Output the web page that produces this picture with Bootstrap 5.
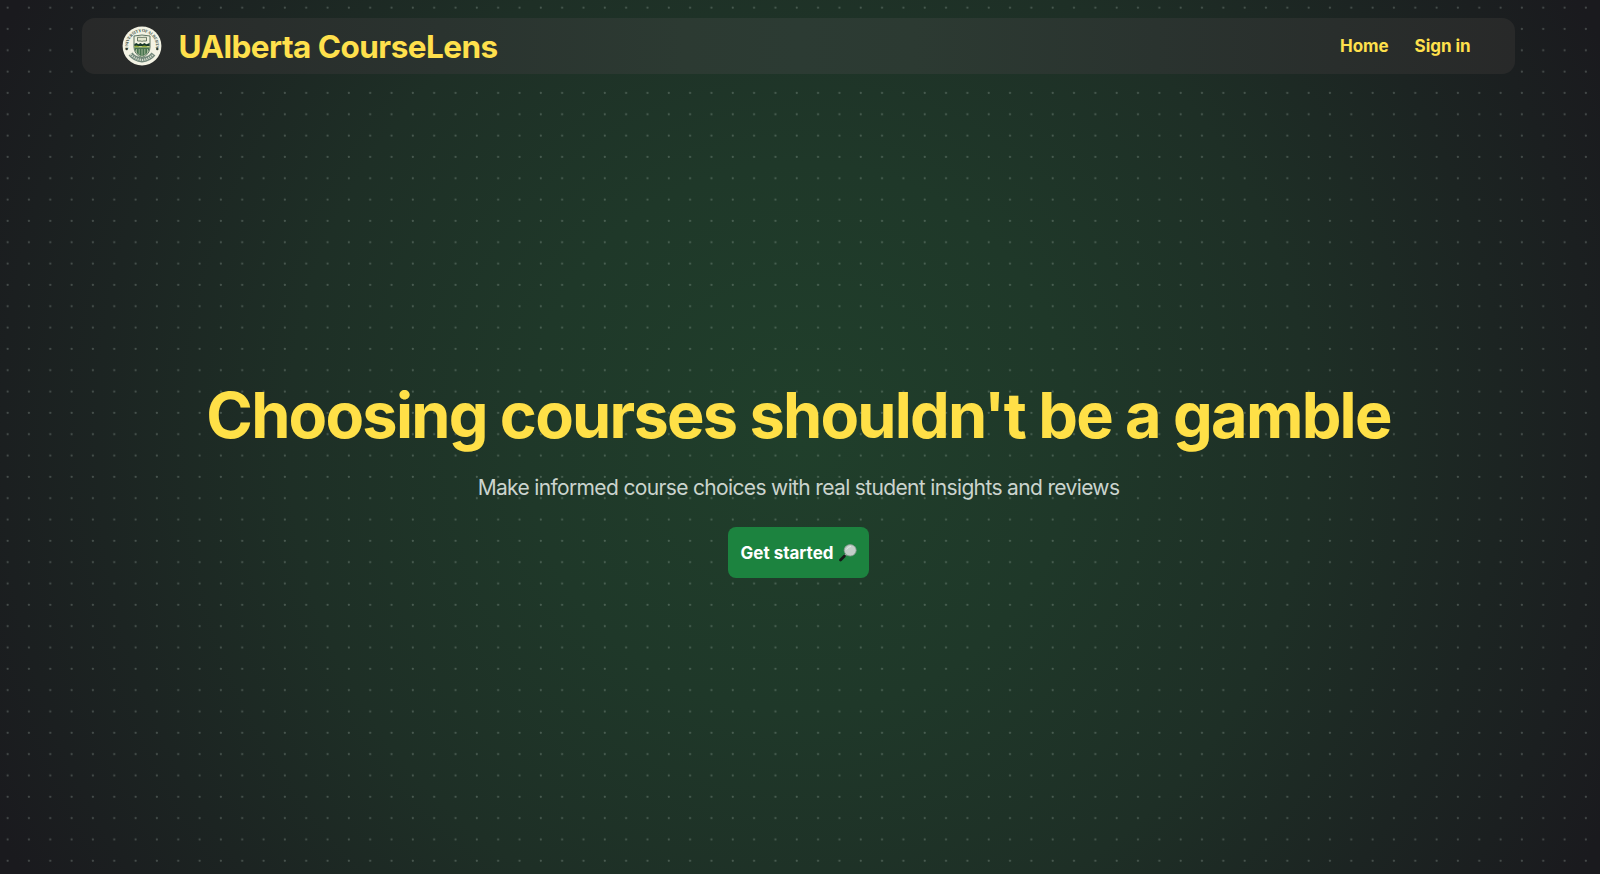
<!DOCTYPE html>
<html lang="en">
<head>
<meta charset="utf-8">
<meta name="viewport" content="width=device-width, initial-scale=1">
<title>UAlberta CourseLens</title>
<link href="https://cdn.jsdelivr.net/npm/bootstrap@5.3.0/dist/css/bootstrap.min.css" rel="stylesheet">
<style>
body{font-family:Inter,"Liberation Sans",sans-serif;background:#1a1a1e;color:#ffe047;overflow:hidden}
.page-shell{padding:18.4px 85px 0 82px;background:
radial-gradient(circle at 7.6px 7.6px,rgba(190,205,195,.34) 0,rgba(190,205,195,.24) .7px,transparent 1.5px) 0 0/21.333px 21.333px,
radial-gradient(circle at 50% 50%,#203f2b 0,#1f3829 30%,#1e2f26 56%,#1c2422 77%,#1a1a1e 98%)}
.top-bar{height:55.6px;border-radius:13px;background:linear-gradient(90deg,#282929,#2a332f 25%,#2c3a32 42%,#2c3b33 50%,#2c3a32 58%,#2a332f 75%,#282929);padding:0 44.5px 0 40px}
.brand-name{font-size:31.5px;font-weight:650;letter-spacing:-.53px;margin-left:16.5px;padding-top:1px;color:#ffe04c}
.top-link{font-size:17px;font-weight:650;letter-spacing:-.05px;padding-top:1px;color:#ffe04c;text-decoration:none}
.hero-title{font-size:63px;font-weight:700;letter-spacing:-1.76px;line-height:72px;white-space:nowrap;margin:0}
.hero-sub{font-size:21px;font-weight:400;line-height:28px;letter-spacing:-.65px;color:#cbd4ce;margin:23px 0 25px}
.btn-start,.btn-start:hover{width:141px;height:51.5px;border:0;border-radius:8px;background:#1c833f;color:#fff;font-size:17px;font-weight:650;padding:2px 0 0}
</style>
</head>
<body>
<div class="page-shell vh-100 d-flex flex-column">
<nav class="top-bar d-flex align-items-center flex-shrink-0">
<svg width="40" height="40" viewBox="0 0 40 40" role="img" aria-label="University of Alberta">
<circle cx="20" cy="20" r="19.4" fill="#f3f3e4"/>
<defs><path id="ring" d="M6.6 24A14 14 0 1 1 33.4 24"/></defs>
<text font-family="Liberation Serif" font-size="4.3" font-weight="700" fill="#46554b"><textPath href="#ring" startOffset="1" textLength="49">UNIVERSITY OF ALBERTA</textPath></text>
<path d="M8.500 28Q13 33.500 20 34Q27 33.500 31.500 28" fill="none" stroke="#71877a" stroke-width="5"/>
<path d="M8.500 28Q13 33.500 20 34Q27 33.500 31.500 28" fill="none" stroke="#d3dacb" stroke-width="2.200" stroke-dasharray="1.200 1"/>
<path d="M12 10Q20 8 28 10V21Q28 28.500 20 31.500Q12 28.500 12 21Z" fill="#f0f1df" stroke="#4d6553" stroke-width=".9"/>
<path d="M15.500 11.300h4l.5.7.5-.7h4v3.700h-4l-.5.6-.5-.6h-4z" fill="#e2e5cd" stroke="#4b5f4d" stroke-width=".8"/>
<path d="M12.400 18l2-1 2 1.300 2-1.300 2 1.300 2-1.300 2 1.300 3.200-1.300v3H12.400z" fill="#17382a"/>
<path d="M12.400 20q2-1 4 0t4 0 4 0 3.200 0v1.600H12.400z" fill="#94ad38"/>
<path d="M12.500 21.600h15q-.2 6-7.500 9-7.300-3-7.500-9z" fill="#47734f"/>
<path d="M14.500 23v4M17.200 23v5.500M20 23v7M22.800 23v5.500M25.500 23v4" stroke="#c8d2b4" stroke-width=".7"/>
<circle cx="4.700" cy="23" r="1.200" fill="#28382e"/><circle cx="35.300" cy="23" r="1.200" fill="#28382e"/>
</svg>
<span class="brand-name">UAlberta CourseLens</span>
<div class="ms-auto d-flex" style="gap:26px"><a class="top-link" href="#">Home</a><a class="top-link" href="#">Sign in</a></div>
</nav>
<main class="d-flex flex-column align-items-center" style="padding-top:305px">
<h1 class="hero-title">Choosing courses shouldn't be a gamble</h1>
<p class="hero-sub">Make informed course choices with real student insights and reviews</p>
<button class="btn btn-start d-flex align-items-center justify-content-center" type="button">Get started
<svg class="ms-1" width="19" height="19" viewBox="0 0 19 19" aria-hidden="true"><path d="M8.500 10L6.500 12" stroke="#aab3ad" stroke-width="1.800"/><path d="M6.500 12L2.500 16" stroke="#151a17" stroke-width="2.800" stroke-linecap="round"/><ellipse cx="12.200" cy="6.300" rx="6" ry="5.700" fill="#c2cec8" stroke="#8c9992" stroke-width=".8"/><path d="M8.500 5.500Q10 2.500 13 2.500" stroke="#e2e8e4" fill="none"/></svg>
</button>
</main>
</div>
<script src="https://cdn.jsdelivr.net/npm/bootstrap@5.3.0/dist/js/bootstrap.bundle.min.js"></script>
</body>
</html>
